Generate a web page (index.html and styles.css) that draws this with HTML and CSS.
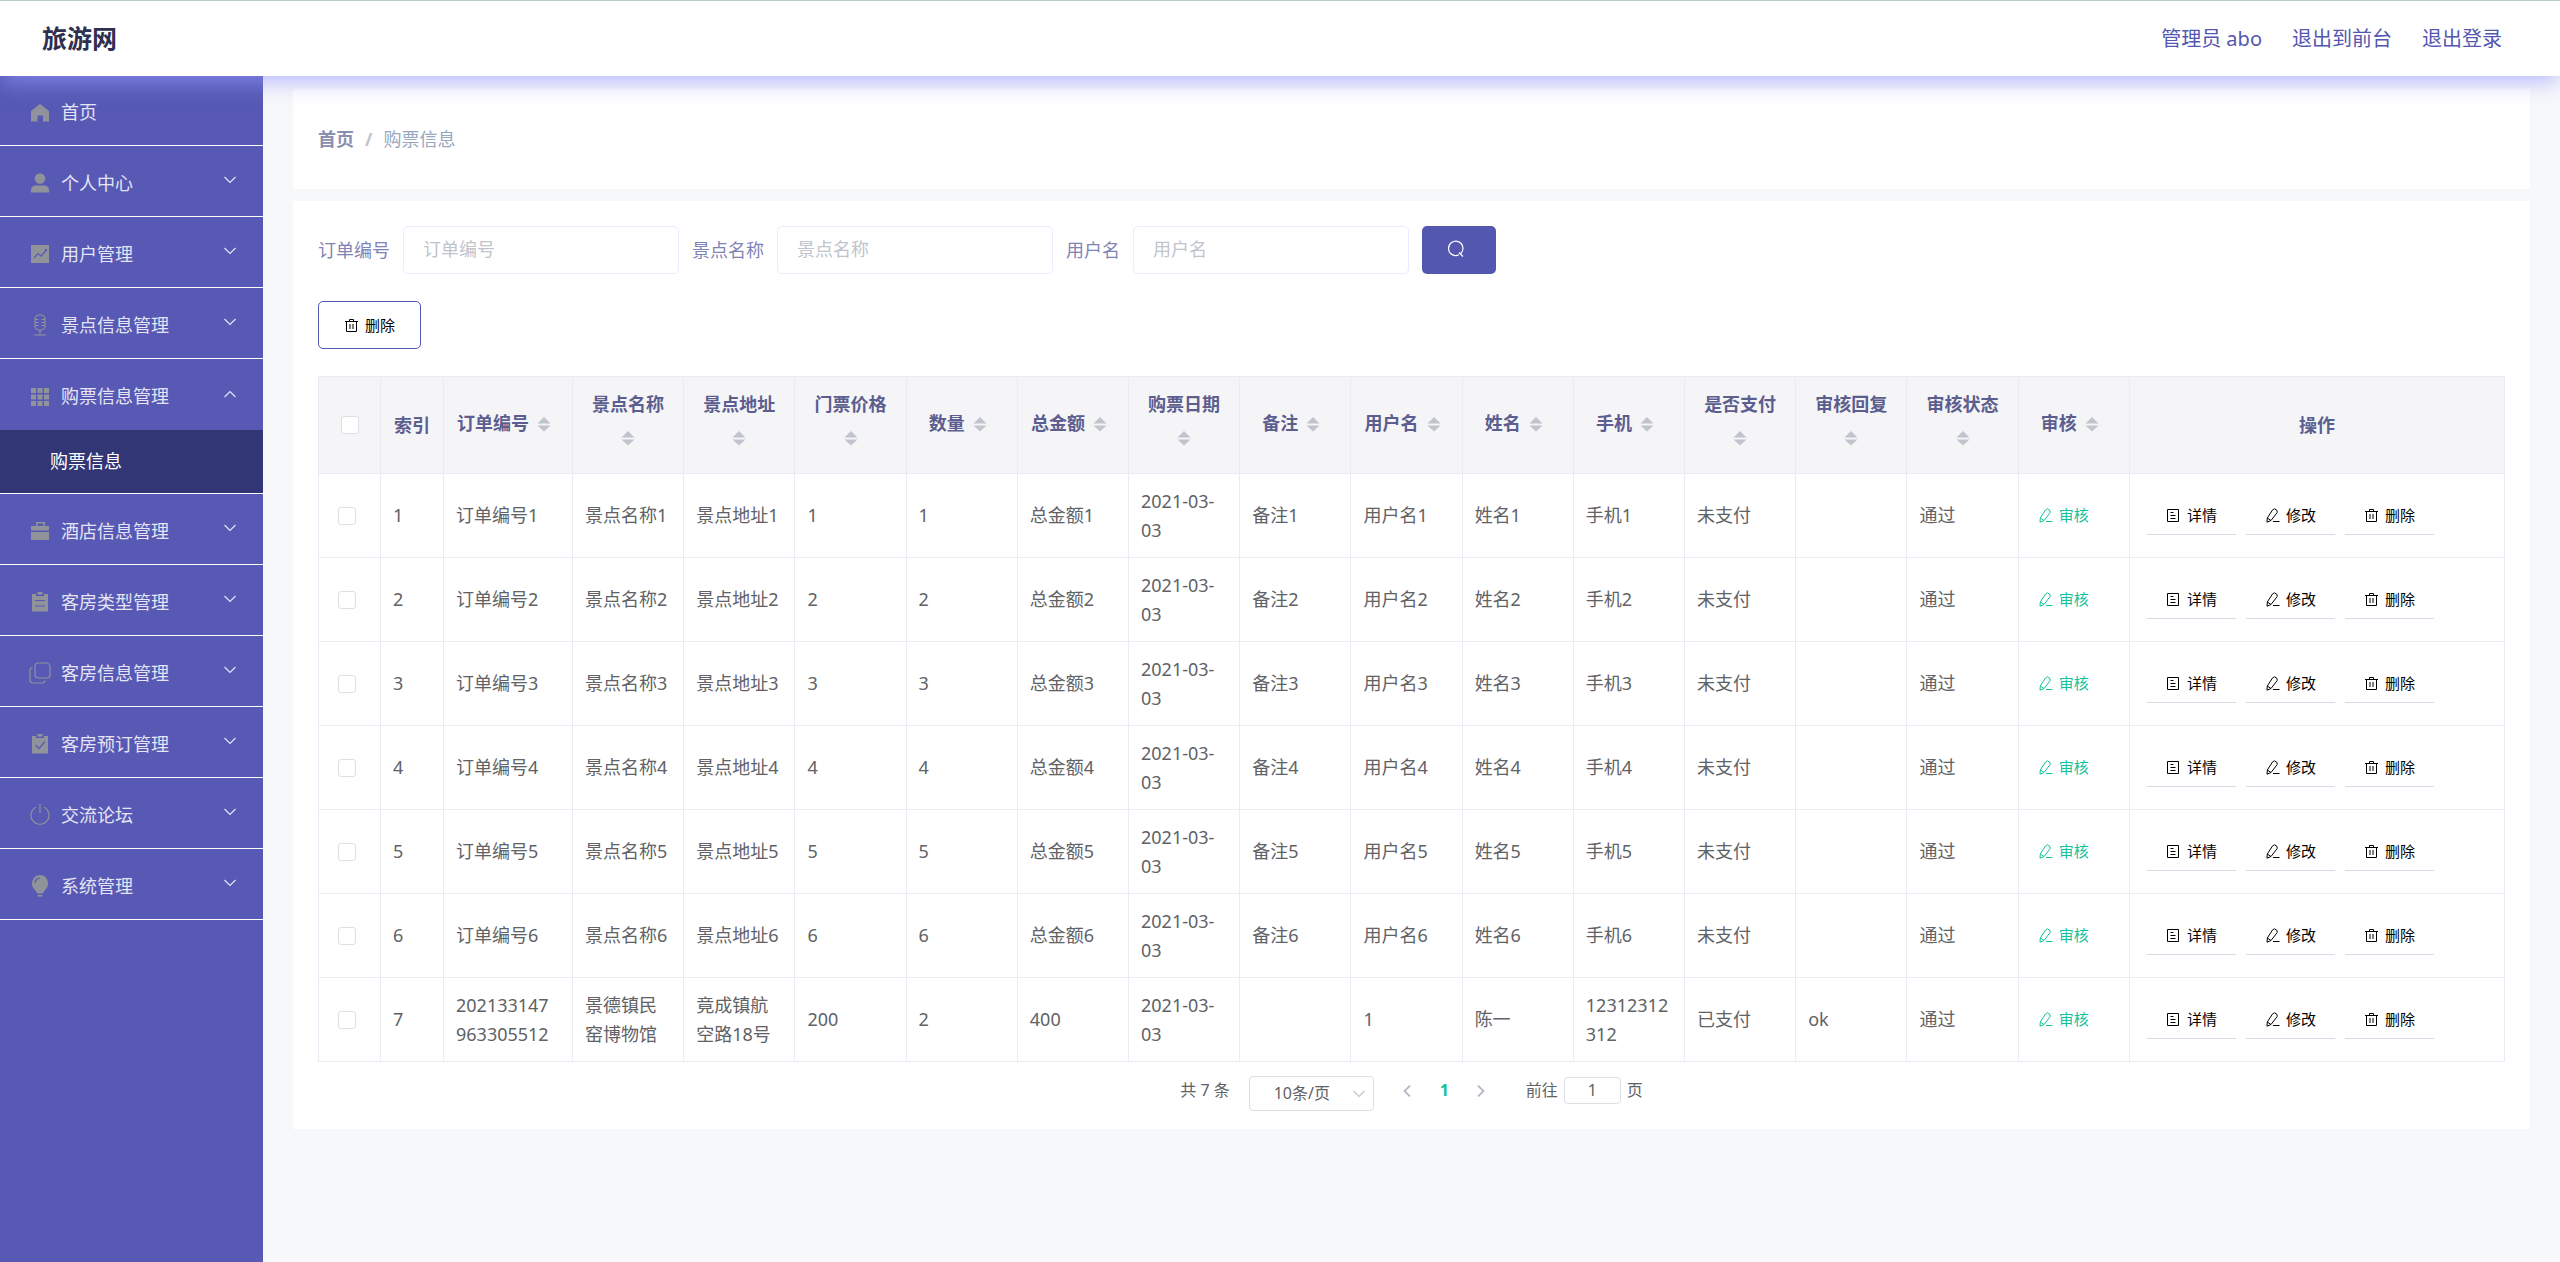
FILE: index.html
```html
<!DOCTYPE html>
<html lang="zh-CN">
<head>
<meta charset="utf-8">
<title>旅游网</title>
<link rel="stylesheet" href="styles.css">
</head>
<body>
<svg class="sprite" aria-hidden="true">
  <symbol id="i-home" viewBox="-2 -2 22 22"><path d="M9 0 18 7v10.500h-6V11.500H6.500v6H0V7z"/></symbol>
  <symbol id="i-user" viewBox="-2 -1 22 22"><circle cx="9" cy="5.500" r="5.200"/><path d="M0 19.500v-2.500a5 5 0 0 1 5-4.500h8a5 5 0 0 1 5 4.500v2.500z"/></symbol>
  <symbol id="i-chart" viewBox="-2 -2 22 22"><path d="M0 0h18v18H0z"/><path class="cutline" d="m3 13 4-4.500 3 2.700L14.500 6"/><circle class="cut" cx="15" cy="5" r="1.200"/></symbol>
  <symbol id="i-mic" viewBox="-2 0 22 22"><path class="line" d="M4 5a4 4 0 0 1 4-4h2a4 4 0 0 1 4 4v7a4 4 0 0 1-4 4H8a4 4 0 0 1-4-4zM4 5.500h3.500M4 8.500h3.500M4 11.500h3.500M14 5.500h-3.500M14 8.500h-3.500M14 11.500h-3.500M9 16v5M3 21h12"/></symbol>
  <symbol id="i-grid" viewBox="-2 -2 22 22"><path d="M0 0h5v5H0zM6.500 0h5v5h-5zM13 0h5v5h-5zM0 6.500h5v5H0zM6.500 6.500h5v5h-5zM13 6.500h5v5h-5zM0 13h5v5H0zM6.500 13h5v5h-5zM13 13h5v5h-5z"/></symbol>
  <symbol id="i-case" viewBox="-2 -2 22 22"><path fill-rule="evenodd" d="M5 0h9v4h4v4.500H0V4h5zM6.500 1.500V4h6V1.500zM0 10h18v8H0z"/></symbol>
  <symbol id="i-order" viewBox="-2 -1 22 22"><path fill-rule="evenodd" d="M1 2h4v2h8V2h4v17.500H1zM6.500 0h5v2.500h-5zM4 8v1h10V8zM4 13.500v1h10v-1z"/></symbol>
  <symbol id="i-copy" viewBox="0 0 22 22"><path class="line" d="M9 1h8a4 4 0 0 1 4 4v8a3 3 0 0 1-3 3H9a3 3 0 0 1-3-3V4a3 3 0 0 1 3-3zM3.500 5.500A3 3 0 0 0 1 8.500V18a3 3 0 0 0 3 3h9a3 3 0 0 0 3-2.500"/></symbol>
  <symbol id="i-claim" viewBox="-2 -1 22 22"><path d="M1 2h4v2h8V2h4v17.500H1zM6.500 0h5v2.500h-5z"/><path class="cutline" d="m4.500 11 3.500 3.500 6-7"/></symbol>
  <symbol id="i-power" viewBox="-1 0 22 22"><path class="line" d="M6 3.200a9 9 0 1 0 8 0M10 0v9"/></symbol>
  <symbol id="i-bulb" viewBox="-2 0 22 22"><path d="M9 0a8.500 8.500 0 0 1 5 15l-2 3.500H6.500L4 15A8.500 8.500 0 0 1 9 0zM6.500 20h5v1.500h-5z"/><path class="cutline" d="M4 8a5 5 0 0 1 5-5"/></symbol>
  <symbol id="i-down" viewBox="0 0 12 8"><path class="line" d="m.500 1 5.500 5.500L11.500 1"/></symbol>
  <symbol id="i-up" viewBox="0 0 12 8"><path class="line" d="m.500 7 5.500-5.500L11.500 7"/></symbol>
  <symbol id="i-left" viewBox="0 0 8 12"><path class="line thick" d="M7 .500 1.500 6 7 11.500"/></symbol>
  <symbol id="i-right" viewBox="0 0 8 12"><path class="line thick" d="m1 .500 5.500 5.500L1 11.500"/></symbol>
  <symbol id="i-search" viewBox="0 0 18 18"><path class="line" d="M12 14.800a7.200 7.200 0 1 1 1.800-1.300M12 12.500l4 4"/></symbol>
  <symbol id="i-trash" viewBox="0 0 15 15"><path class="line thin" d="M1 3.500h13M2.500 3.500v10h10v-10M5.500 3.500v-2h4v2M6 6v5M9 6v5"/></symbol>
  <symbol id="i-doc" viewBox="0 0 15 15"><path class="line thin" d="M1.500 1.500h11v12h-11zM4.500 4.500h3M4.500 7.500h5M4.500 10.500h5"/></symbol>
  <symbol id="i-edit" viewBox="0 0 15 15"><path class="line thin" d="m7.500 2 2-1.200 2.500 1.700.200 2L6 12.500l-4 1.700.300-4.200zM2.300 10 6 12.500M8 13.500h6.500"/></symbol>
  <symbol id="i-sort" viewBox="0 0 14 16"><path d="m7 1 6.500 6.500H.500zM7 15.500.500 9.500h13z"/></symbol>
</svg>

<header class="topbar">
  <h1 class="brand">旅游网</h1>
  <nav class="toplinks">
    <a href="#">管理员 abo</a>
    <a href="#">退出到前台</a>
    <a href="#">退出登录</a>
  </nav>
</header>

<div class="shell">
  <nav class="side">
    <a class="item" href="#"><svg class="ico"><use href="#i-home"/></svg>首页</a>
    <a class="item" href="#"><svg class="ico"><use href="#i-user"/></svg>个人中心<svg class="arrow"><use href="#i-down"/></svg></a>
    <a class="item" href="#"><svg class="ico"><use href="#i-chart"/></svg>用户管理<svg class="arrow"><use href="#i-down"/></svg></a>
    <a class="item" href="#"><svg class="ico"><use href="#i-mic"/></svg>景点信息管理<svg class="arrow"><use href="#i-down"/></svg></a>
    <a class="item open" href="#"><svg class="ico"><use href="#i-grid"/></svg>购票信息管理<svg class="arrow"><use href="#i-up"/></svg></a>
    <a class="subitem" href="#">购票信息</a>
    <a class="item" href="#"><svg class="ico"><use href="#i-case"/></svg>酒店信息管理<svg class="arrow"><use href="#i-down"/></svg></a>
    <a class="item" href="#"><svg class="ico"><use href="#i-order"/></svg>客房类型管理<svg class="arrow"><use href="#i-down"/></svg></a>
    <a class="item" href="#"><svg class="ico"><use href="#i-copy"/></svg>客房信息管理<svg class="arrow"><use href="#i-down"/></svg></a>
    <a class="item" href="#"><svg class="ico"><use href="#i-claim"/></svg>客房预订管理<svg class="arrow"><use href="#i-down"/></svg></a>
    <a class="item" href="#"><svg class="ico"><use href="#i-power"/></svg>交流论坛<svg class="arrow"><use href="#i-down"/></svg></a>
    <a class="item" href="#"><svg class="ico"><use href="#i-bulb"/></svg>系统管理<svg class="arrow"><use href="#i-down"/></svg></a>
  </nav>

  <main class="main">
    <nav class="card crumbs"><a href="#">首页</a><span class="sep">/</span><span class="here">购票信息</span></nav>

    <section class="card list">
      <form class="search">
        <label for="q-order">订单编号</label><input id="q-order" type="text" placeholder="订单编号">
        <label for="q-spot">景点名称</label><input id="q-spot" type="text" placeholder="景点名称">
        <label for="q-user">用户名</label><input id="q-user" type="text" placeholder="用户名">
        <button class="go" type="button" aria-label="查询"><svg><use href="#i-search"/></svg></button>
      </form>
      <button class="remove" type="button"><svg class="bi"><use href="#i-trash"/></svg>删除</button>

      <table class="grid">
        <colgroup><col class="c-check"><col class="c-index"><col class="c-order"><col span="14"><col class="c-ops"></colgroup>
        <thead>
          <tr>
            <th><input type="checkbox" aria-label="全选"></th>
            <th>索引</th>
            <th>订单编号<button class="sort" type="button" aria-label="排序"><svg><use href="#i-sort"/></svg></button></th>
            <th>景点名称<button class="sort" type="button" aria-label="排序"><svg><use href="#i-sort"/></svg></button></th>
            <th>景点地址<button class="sort" type="button" aria-label="排序"><svg><use href="#i-sort"/></svg></button></th>
            <th>门票价格<button class="sort" type="button" aria-label="排序"><svg><use href="#i-sort"/></svg></button></th>
            <th>数量<button class="sort" type="button" aria-label="排序"><svg><use href="#i-sort"/></svg></button></th>
            <th>总金额<button class="sort" type="button" aria-label="排序"><svg><use href="#i-sort"/></svg></button></th>
            <th>购票日期<button class="sort" type="button" aria-label="排序"><svg><use href="#i-sort"/></svg></button></th>
            <th>备注<button class="sort" type="button" aria-label="排序"><svg><use href="#i-sort"/></svg></button></th>
            <th>用户名<button class="sort" type="button" aria-label="排序"><svg><use href="#i-sort"/></svg></button></th>
            <th>姓名<button class="sort" type="button" aria-label="排序"><svg><use href="#i-sort"/></svg></button></th>
            <th>手机<button class="sort" type="button" aria-label="排序"><svg><use href="#i-sort"/></svg></button></th>
            <th>是否支付<button class="sort" type="button" aria-label="排序"><svg><use href="#i-sort"/></svg></button></th>
            <th>审核回复<button class="sort" type="button" aria-label="排序"><svg><use href="#i-sort"/></svg></button></th>
            <th>审核状态<button class="sort" type="button" aria-label="排序"><svg><use href="#i-sort"/></svg></button></th>
            <th>审核<button class="sort" type="button" aria-label="排序"><svg><use href="#i-sort"/></svg></button></th>
            <th>操作</th>
          </tr>
        </thead>
        <tbody>
          <tr>
            <td><input type="checkbox" aria-label="选择第1行"></td><td>1</td><td class="order">订单编号1</td><td>景点名称1</td><td>景点地址1</td><td>1</td><td>1</td><td>总金额1</td><td>2021-03-03</td><td>备注1</td><td>用户名1</td><td>姓名1</td><td class="phone">手机1</td><td>未支付</td><td></td><td>通过</td>
            <td><button class="audit" type="button"><svg class="bi"><use href="#i-edit"/></svg>审核</button></td>
            <td><div class="ops"><button type="button"><svg class="bi"><use href="#i-doc"/></svg>详情</button><button type="button"><svg class="bi"><use href="#i-edit"/></svg>修改</button><button type="button"><svg class="bi"><use href="#i-trash"/></svg>删除</button></div></td>
          </tr>
          <tr>
            <td><input type="checkbox" aria-label="选择第2行"></td><td>2</td><td class="order">订单编号2</td><td>景点名称2</td><td>景点地址2</td><td>2</td><td>2</td><td>总金额2</td><td>2021-03-03</td><td>备注2</td><td>用户名2</td><td>姓名2</td><td class="phone">手机2</td><td>未支付</td><td></td><td>通过</td>
            <td><button class="audit" type="button"><svg class="bi"><use href="#i-edit"/></svg>审核</button></td>
            <td><div class="ops"><button type="button"><svg class="bi"><use href="#i-doc"/></svg>详情</button><button type="button"><svg class="bi"><use href="#i-edit"/></svg>修改</button><button type="button"><svg class="bi"><use href="#i-trash"/></svg>删除</button></div></td>
          </tr>
          <tr>
            <td><input type="checkbox" aria-label="选择第3行"></td><td>3</td><td class="order">订单编号3</td><td>景点名称3</td><td>景点地址3</td><td>3</td><td>3</td><td>总金额3</td><td>2021-03-03</td><td>备注3</td><td>用户名3</td><td>姓名3</td><td class="phone">手机3</td><td>未支付</td><td></td><td>通过</td>
            <td><button class="audit" type="button"><svg class="bi"><use href="#i-edit"/></svg>审核</button></td>
            <td><div class="ops"><button type="button"><svg class="bi"><use href="#i-doc"/></svg>详情</button><button type="button"><svg class="bi"><use href="#i-edit"/></svg>修改</button><button type="button"><svg class="bi"><use href="#i-trash"/></svg>删除</button></div></td>
          </tr>
          <tr>
            <td><input type="checkbox" aria-label="选择第4行"></td><td>4</td><td class="order">订单编号4</td><td>景点名称4</td><td>景点地址4</td><td>4</td><td>4</td><td>总金额4</td><td>2021-03-03</td><td>备注4</td><td>用户名4</td><td>姓名4</td><td class="phone">手机4</td><td>未支付</td><td></td><td>通过</td>
            <td><button class="audit" type="button"><svg class="bi"><use href="#i-edit"/></svg>审核</button></td>
            <td><div class="ops"><button type="button"><svg class="bi"><use href="#i-doc"/></svg>详情</button><button type="button"><svg class="bi"><use href="#i-edit"/></svg>修改</button><button type="button"><svg class="bi"><use href="#i-trash"/></svg>删除</button></div></td>
          </tr>
          <tr>
            <td><input type="checkbox" aria-label="选择第5行"></td><td>5</td><td class="order">订单编号5</td><td>景点名称5</td><td>景点地址5</td><td>5</td><td>5</td><td>总金额5</td><td>2021-03-03</td><td>备注5</td><td>用户名5</td><td>姓名5</td><td class="phone">手机5</td><td>未支付</td><td></td><td>通过</td>
            <td><button class="audit" type="button"><svg class="bi"><use href="#i-edit"/></svg>审核</button></td>
            <td><div class="ops"><button type="button"><svg class="bi"><use href="#i-doc"/></svg>详情</button><button type="button"><svg class="bi"><use href="#i-edit"/></svg>修改</button><button type="button"><svg class="bi"><use href="#i-trash"/></svg>删除</button></div></td>
          </tr>
          <tr>
            <td><input type="checkbox" aria-label="选择第6行"></td><td>6</td><td class="order">订单编号6</td><td>景点名称6</td><td>景点地址6</td><td>6</td><td>6</td><td>总金额6</td><td>2021-03-03</td><td>备注6</td><td>用户名6</td><td>姓名6</td><td class="phone">手机6</td><td>未支付</td><td></td><td>通过</td>
            <td><button class="audit" type="button"><svg class="bi"><use href="#i-edit"/></svg>审核</button></td>
            <td><div class="ops"><button type="button"><svg class="bi"><use href="#i-doc"/></svg>详情</button><button type="button"><svg class="bi"><use href="#i-edit"/></svg>修改</button><button type="button"><svg class="bi"><use href="#i-trash"/></svg>删除</button></div></td>
          </tr>
          <tr>
            <td><input type="checkbox" aria-label="选择第7行"></td><td>7</td><td class="order">202133147963305512</td><td>景德镇民窑博物馆</td><td>竟成镇航空路18号</td><td>200</td><td>2</td><td>400</td><td>2021-03-03</td><td></td><td>1</td><td>陈一</td><td class="phone">12312312312</td><td>已支付</td><td>ok</td><td>通过</td>
            <td><button class="audit" type="button"><svg class="bi"><use href="#i-edit"/></svg>审核</button></td>
            <td><div class="ops"><button type="button"><svg class="bi"><use href="#i-doc"/></svg>详情</button><button type="button"><svg class="bi"><use href="#i-edit"/></svg>修改</button><button type="button"><svg class="bi"><use href="#i-trash"/></svg>删除</button></div></td>
          </tr>
        </tbody>
      </table>

      <div class="pager">
        <span>共 7 条</span>
        <span class="size"><select aria-label="每页条数"><option>10条/页</option></select><svg><use href="#i-down"/></svg></span>
        <div class="pages">
          <button type="button" aria-label="上一页"><svg><use href="#i-left"/></svg></button>
          <button class="current" type="button">1</button>
          <button type="button" aria-label="下一页"><svg><use href="#i-right"/></svg></button>
        </div>
        <label class="jump">前往<input type="text" value="1">页</label>
      </div>
    </section>
  </main>
</div>
</body>
</html>
```
FILE: styles.css
```css
* { box-sizing: border-box; }

body {
  margin: 0;
  min-height: 100vh;
  display: flex;
  flex-direction: column;
  background: #f7f8fa;
  color: #606266;
  font: 18px/29px "Noto Sans", "Noto Sans CJK SC", sans-serif;
}

button, input, select { font: inherit; color: inherit; }
button { cursor: pointer; }
a { color: inherit; text-decoration: none; }
svg { fill: currentColor; flex: none; }
.sprite { position: absolute; width: 0; height: 0; }
.line { fill: none; stroke: currentColor; stroke-width: 1.2; }
.thin { stroke-width: 1; }
.thick { stroke-width: 1.8; }
.cut { fill: #5759b5; }
.cutline { fill: none; stroke: #5759b5; stroke-width: 1.2; }

/* top bar */
.topbar {
  position: relative;
  z-index: 1;
  height: 76px;
  padding: 0 58px 0 42px;
  display: flex;
  align-items: center;
  justify-content: space-between;
  background: #fff;
  border-top: 1px solid #b8cccc;
  box-shadow: 0 8px 20px -2px rgba(150, 155, 255, .65);
}
.brand { margin: 0; font-size: 25px; color: #2f3050; }
.toplinks { display: flex; gap: 30px; font-size: 20px; color: #5457b0; }

/* side menu */
.shell { flex: 1; display: flex; }
.side { flex: none; width: 263px; background: #5759b5; color: #e4e4f2; }
.item {
  display: flex;
  align-items: center;
  height: 71px;
  padding: 4px 27px 0 29px;
  border-bottom: 1px solid #fff;
}
.item:first-child { height: 70px; }
.item.open { border-bottom: 0; }
.ico { width: 22px; height: 22px; margin-right: 10px; color: #909399; }
.arrow { width: 12px; height: 8px; margin: 0 0 6px auto; }
.subitem {
  display: flex;
  align-items: center;
  height: 64px;
  padding-left: 50px;
  background: #333675;
  border-bottom: 1px solid #fff;
  color: #fff;
}

/* content */
.main { flex: 1; min-width: 0; padding: 13px 30px; display: flex; flex-direction: column; gap: 12px; }
.card { background: #fff; padding: 25px; }
.crumbs { height: 100px; display: flex; align-items: center; gap: 11px; }
.crumbs a { font-weight: 700; color: #8a8fb0; }
.sep { font-weight: 700; color: #c0c4cc; }
.here { color: #97a8be; }
.list { padding-bottom: 18px; }

.search { display: flex; align-items: center; gap: 13px; color: #7f84b5; }
.search input {
  width: 276px;
  height: 48px;
  padding: 0 19px 2px;
  border: 1px solid #ebebff;
  border-radius: 5px;
  background: #fff;
}
.search input::placeholder { color: #c0c4cc; opacity: 1; }
.go {
  width: 74px;
  height: 48px;
  display: grid;
  place-items: center;
  padding: 0 6px 2px 0;
  border: 0;
  border-radius: 5px;
  background: #5457b0;
  color: #fff;
}
.go svg { width: 18px; height: 18px; }

.remove, .ops button, .audit {
  display: flex;
  align-items: center;
  gap: 6px;
  border: 0;
  background: none;
  color: #000;
  font-size: 15px;
}
.bi { width: 15px; height: 15px; }
.remove {
  height: 48px;
  margin: 27px 0;
  padding: 0 25px;
  border: 1px solid #5457b0;
  border-radius: 5px;
}
.audit { padding: 0 0 0 7px; color: #11c29b; }
.ops { display: flex; gap: 10px; padding-left: 5px; }
.ops button { height: 38px; padding: 0 19px; border-bottom: 1px solid #d8d9e6; }

/* data table */
.grid { width: 100%; table-layout: fixed; border-collapse: collapse; }
.c-check { width: 62px; }
.c-index { width: 63px; }
.c-order { width: 129px; }
.c-ops { width: 375px; }
.grid th, .grid td { border: 1px solid #e9ebf5; padding: 0 12px; }
.grid th { height: 97px; background: #f5f5f8; color: #5b5e8e; font-weight: 700; text-align: center; }
.grid td { height: 84px; }
.grid .order, .grid .phone { word-break: break-all; }
.grid .order { padding-right: 16px; }
.grid td:first-child { padding-left: 19px; }
.sort {
  display: inline-flex;
  align-items: center;
  justify-content: center;
  width: 30px;
  height: 42px;
  padding: 0 0 3px;
  border: 0;
  background: none;
  vertical-align: middle;
  color: #c0c4cc;
}
.sort svg { width: 14px; height: 16px; }
input[type="checkbox"] {
  appearance: none;
  display: block;
  width: 18px;
  height: 18px;
  margin: 0;
  border: 1px solid #dcdfe6;
  border-radius: 3px;
  background: #fff;
}
.grid th input[type="checkbox"] { margin: 0 auto; }

/* pagination */
.pager { display: flex; justify-content: center; align-items: flex-start; padding-top: 14px; font-size: 16px; }
.size { display: grid; align-items: center; margin: 0 15px 0 19px; }
.size select, .size svg { grid-area: 1 / 1; }
.size select {
  appearance: none;
  width: 125px;
  height: 35px;
  padding: 0 24px;
  border: 1px solid #dcdfe6;
  border-radius: 4px;
  background: #fff;
}
.size svg { width: 12px; height: 8px; justify-self: end; margin-right: 9px; color: #c0c4cc; pointer-events: none; }
.pages { display: flex; }
.pages button { width: 37px; height: 29px; display: grid; place-items: center; padding: 0; border: 0; background: none; color: #b4b8c2; }
.pages svg { width: 8px; height: 12px; }
.pages .current { color: #11c29b; font-weight: 700; }
.jump { display: flex; align-items: center; margin-left: 26px; }
.jump input {
  width: 57px;
  height: 27px;
  margin: 0 6px;
  padding: 0;
  border: 1px solid #dcdfe6;
  border-radius: 4px;
  background: #fff;
  text-align: center;
}
```
